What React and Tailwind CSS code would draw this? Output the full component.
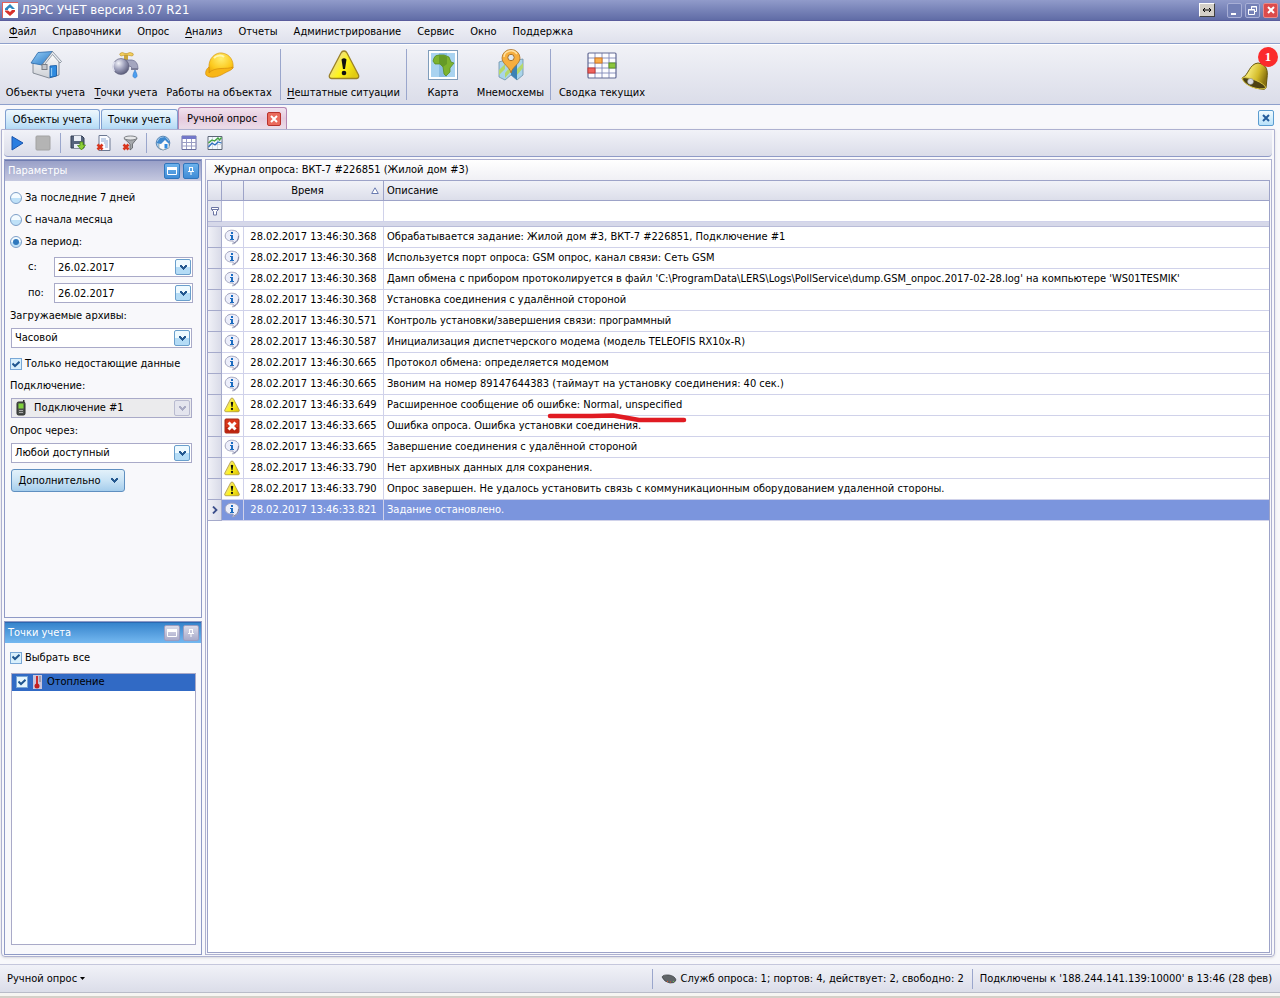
import React from "react";

const CHEVRON = "M0 0h2v1h1v1h1v-1h1v-1h2v2h-1v1h-1v1h-1v1h-1v-1h-1v-1h-1v-1h-1z";

function House({ className }) {
  return (
    <svg viewBox="0 0 32 32" className={className} aria-hidden="true">
      <defs>
        <linearGradient id="roof" x1="0" y1="0" x2="1" y2="1">
          <stop offset="0" stopColor="#9bd2f8" />
          <stop offset="1" stopColor="#2474c4" />
        </linearGradient>
        <linearGradient id="wall" x1="0" y1="0" x2="0" y2="1">
          <stop offset="0" stopColor="#ffffff" />
          <stop offset="1" stopColor="#cdd0d6" />
        </linearGradient>
      </defs>
      <path d="M3 13 L3 24 L19 29 L29 26 V12 L22 4 L12 15 Z" fill="url(#wall)" stroke="#7d838f" strokeWidth="0.900" />
      <path d="M1 14 L8 3.500 L22.500 2.500 L12 16 Z" fill="url(#roof)" stroke="#2867a8" strokeWidth="0.800" />
      <path d="M22.500 2.500 L31.500 12.500 L30 14 L22.500 5.500 L13 17.500 L12 16 Z" fill="#e9edf2" stroke="#6f7886" strokeWidth="0.700" />
      <rect x="12" y="15.500" width="5" height="5" fill="#c3c6cc" stroke="#7b7f87" />
      <path d="M20 17 L26.500 16.500 V27 L20 28.500 Z" fill="#2f8be0" stroke="#1b5da5" strokeWidth="0.900" />
      <path d="M21.500 19v8" stroke="#8cc8f4" strokeWidth="1.200" />
    </svg>
  );
}

function Faucet() {
  return (
    <svg viewBox="0 0 32 32" className="h-8 w-8" aria-hidden="true">
      <defs>
        <radialGradient id="ball" cx="0.350" cy="0.300" r="0.800">
          <stop offset="0" stopColor="#f2f3fa" />
          <stop offset="0.500" stopColor="#9a9cb8" />
          <stop offset="1" stopColor="#4d4f6c" />
        </radialGradient>
      </defs>
      <path d="M14 6h4v7h-4z" fill="#c9a53c" />
      <path d="M10 4.500 q2 -2 5 0 h2 q3 -2 6 0 q1 2 -1 2.500 l-5 -1 h-2 l-4 1 q-2 -1 -1 -2.500z" fill="#f4cf5c" stroke="#b98f28" strokeWidth="0.600" />
      <path d="M13 11 h9 q6 1 6 9 h-6 q0 -3 -3 -3 h-6z" fill="#a4a6bf" stroke="#65678a" strokeWidth="0.700" />
      <circle cx="11" cy="17.500" r="8" fill="url(#ball)" stroke="#5b5d7b" strokeWidth="0.600" />
      <path d="M4.500 13c-2 2-2 7 0 9" stroke="#e0e1ef" strokeWidth="1.500" fill="none" />
      <path d="M21 19h7v2h-7z" fill="#7b7d98" />
      <path d="M25 21c2.500 5 3 7 0 8c-3-1-2.500-3 0-8z" fill="#4d9ff0" stroke="#2b76c9" strokeWidth="0.600" />
    </svg>
  );
}

function Helmet() {
  return (
    <svg viewBox="0 0 32 32" className="h-8 w-8" aria-hidden="true">
      <defs>
        <radialGradient id="hat" cx="0.500" cy="0.250" r="0.800">
          <stop offset="0" stopColor="#ffee70" />
          <stop offset="0.600" stopColor="#fcc91c" />
          <stop offset="1" stopColor="#e39a08" />
        </radialGradient>
      </defs>
      <path d="M6 19 C5 9 13 3 19 4 C27 5 31 12 30 19 L22 23 C17 21 10 22 6 27 Z" fill="url(#hat)" stroke="#d99a14" strokeWidth="0.700" />
      <path d="M6 18 C3 20 2 24 3 26 C7 30 15 28 20 25 C25 22 30 21 30 18 C24 21 12 17 6 24 Z" fill="#f8b616" stroke="#d48c0b" strokeWidth="0.700" />
      <path d="M11 9 C14 6 19 6 21 8" stroke="#fff6b0" strokeWidth="2" fill="none" />
    </svg>
  );
}

function Warning({ className }) {
  return (
    <svg viewBox="0 0 32 32" className={className} aria-hidden="true">
      <defs>
        <linearGradient id="warn" x1="0" y1="0" x2="1" y2="0.600">
          <stop offset="0.300" stopColor="#efdf86" />
          <stop offset="0.600" stopColor="#fff51a" />
          <stop offset="1" stopColor="#e2cb12" />
        </linearGradient>
      </defs>
      <path d="M16 2 Q18 2 19 4 L30.500 26 Q31.500 29 28.500 29.500 H3.500 Q0.500 29 1.500 26 L13 4 Q14 2 16 2Z" fill="url(#warn)" stroke="#9b8228" strokeWidth="1.300" />
      <path d="M13.500 10.500 Q16 8 18.500 10.500 L17 20 H15Z" fill="#111" />
      <circle cx="16" cy="24" r="2.300" fill="#111" />
    </svg>
  );
}

function AfricaMap() {
  return (
    <svg viewBox="0 0 32 32" className="h-8 w-8" aria-hidden="true">
      <rect x="1.500" y="1.500" width="29" height="29" fill="#fff" stroke="#7f9dbb" />
      <rect x="4" y="4" width="24" height="24" fill="#a9d3f0" />
      <path d="M12 4h8v24h-8z" fill="#8abde2" />
      <path d="M7 9 Q8 6 12 6 L17 6 L22 8 L24 13 L27 14 L23 19 L23 23 L19 27 L17 25 L16 18 L13 15 L8 15 L6 12Z" fill="#7db32f" stroke="#50861a" strokeWidth="0.700" />
      <path d="M12 6.500h5l3 1.500v7l-4 3-3-3h-1z" fill="#659a28" />
    </svg>
  );
}

function MapPin() {
  return (
    <svg viewBox="0 0 32 32" className="h-8 w-8" aria-hidden="true">
      <path d="M4 13 L10 11 L16 14 L22 11 L28 10 V26 L22 31 L16 26 L10 31 L4 28Z" fill="#a9d4ea" stroke="#6d8fa8" strokeWidth="0.800" />
      <path d="M16 14 L22 11 V31 L16 26Z" fill="#3c82b4" />
      <path d="M4 21 L10 15 V20 L4 26Z M10 24 L16 17 V22 L10 29Z M22 20 L28 14 V19 L22 26Z" fill="#b5d86a" />
      <path d="M16 24 C15 18 7 15 7 9 A9 8.500 0 0 1 25 9 C25 15 17 18 16 24Z" fill="#f6ae3e" stroke="#a9722a" strokeWidth="0.800" />
      <path d="M9 8 A7 6.500 0 0 1 22 5" stroke="#ffe0a0" strokeWidth="1.500" fill="none" />
      <circle cx="16" cy="8.500" r="3.200" fill="#dfeaf2" stroke="#a9722a" strokeWidth="1" />
    </svg>
  );
}

function Summary() {
  return (
    <svg viewBox="0 0 32 32" className="h-8 w-8" aria-hidden="true">
      <rect x="2" y="4" width="28" height="25" rx="1" fill="#fdfdff" />
      <path d="M9 4v25M16 4v25M23 4v25M2 9h28M2 14h28M2 19h28M2 24h28" stroke="#7f88b8" strokeWidth="0.900" />
      <rect x="9" y="9" width="7" height="5" fill="#f9b04c" stroke="#d8791d" />
      <rect x="23" y="14" width="7" height="5" fill="#8cc63c" stroke="#5c9620" />
      <rect x="2" y="4" width="28" height="25" rx="1" fill="none" stroke="#636a94" strokeWidth="1.200" />
      <rect x="2" y="19" width="7" height="5" fill="#f0645e" stroke="#c43a35" />
    </svg>
  );
}

function Bell() {
  return (
    <svg viewBox="0 0 32 32" className="h-8 w-8" aria-hidden="true">
      <defs>
        <linearGradient id="bell" x1="0" y1="0" x2="1" y2="0.400">
          <stop offset="0" stopColor="#8d7a16" />
          <stop offset="0.350" stopColor="#f3e670" />
          <stop offset="0.700" stopColor="#d3bb2a" />
          <stop offset="1" stopColor="#8a7410" />
        </linearGradient>
      </defs>
      <path d="M2 17 C9 14 9 3 18 2 C27 3 28 10 27 17 L26 27 Q25 29 21 28 C13 27 5 23 2 17Z" fill="url(#bell)" stroke="#665509" strokeWidth="1" />
      <path d="M2 17 C8 15 25 22 26 27 C19 30 4 25 2 17Z" fill="#4d4212" stroke="#d8c544" strokeWidth="1" />
      <circle cx="10.500" cy="20.500" r="3" fill="#d9dde4" stroke="#777" strokeWidth="0.500" />
    </svg>
  );
}

function InfoIcon() {
  return (
    <svg viewBox="0 0 16 16" className="h-4 w-4" aria-hidden="true">
      <path d="M7.500 1.200 C12.500 1.200 14.800 3.500 14.800 7 C14.800 11 12.500 14 8.500 15 C9.500 13.800 9.500 12.800 9 12 C4 12.500 1.200 10 1.200 7 C1.200 3.500 4 1.200 7.500 1.200Z" fill="#eceefa" stroke="#a3a6c0" />
      <path d="M10 14c3-1.500 4.500-4 4.500-7" stroke="#7f82a0" fill="none" />
      <path d="M7 3h2v2H7zM6 6h3v4h1v1H6v-1h1V7H6z" fill="#1b6cc0" />
    </svg>
  );
}

function ErrorIcon() {
  return (
    <svg viewBox="0 0 16 16" className="h-4 w-4" aria-hidden="true">
      <rect x="1" y="1" width="14" height="14" rx="1" fill="#d8371c" stroke="#a32511" />
      <path d="M1.500 9h13v5.500h-13z" fill="#bb2410" />
      <path d="M4.500 4.500l7 7M11.500 4.500l-7 7" stroke="#fff" strokeWidth="3" />
    </svg>
  );
}

const ICONS = { info: InfoIcon, error: ErrorIcon, warn: () => <Warning className="h-4 w-4" /> };

const MENU = [
  ["Ф", "айл"], ["", "Справочники"], ["", "Опрос"], ["А", "нализ"], ["", "Отчеты"],
  ["", "Администрирование"], ["", "Сервис"], ["", "Окно"], ["", "Поддержка"],
];

const ROWS = [
  ["info", "30.368", "Обрабатывается задание: Жилой дом #3, ВКТ-7 #226851, Подключение #1"],
  ["info", "30.368", "Используется порт опроса: GSM опрос, канал связи: Сеть GSM"],
  ["info", "30.368", "Дамп обмена с прибором протоколируется в файл 'C:\\ProgramData\\LERS\\Logs\\PollService\\dump.GSM_опрос.2017-02-28.log' на компьютере 'WS01TESMIK'"],
  ["info", "30.368", "Установка соединения с удалённой стороной"],
  ["info", "30.571", "Контроль установки/завершения связи: программный"],
  ["info", "30.587", "Инициализация диспетчерского модема (модель TELEOFIS RX10x-R)"],
  ["info", "30.665", "Протокол обмена: определяется модемом"],
  ["info", "30.665", "Звоним на номер 89147644383 (таймаут на установку соединения: 40 сек.)"],
  ["warn", "33.649", "Расширенное сообщение об ошибке: Normal, unspecified"],
  ["error", "33.665", "Ошибка опроса. Ошибка установки соединения."],
  ["info", "33.665", "Завершение соединения с удалённой стороной"],
  ["warn", "33.790", "Нет архивных данных для сохранения."],
  ["warn", "33.790", "Опрос завершен. Не удалось установить связь с коммуникационным оборудованием удаленной стороны."],
  ["info", "33.821", "Задание остановлено."],
];

function BigButton({ icon, hot, label, width }) {
  return (
    <button className={`flex flex-col items-center whitespace-nowrap pt-1 ${width}`}>
      {icon}
      <span className="mt-1 leading-4">
        {hot ? <u className="underline-offset-2">{hot}</u> : null}
        {label}
      </span>
    </button>
  );
}

function Divider() {
  return <span className="mx-1 my-1 w-px shrink-0 bg-[#9aa6cc]" />;
}

function DropGlyph({ disabled }) {
  return (
    <span
      className={`pointer-events-none absolute top-0.5 right-0.5 flex h-4 w-4 items-center justify-center rounded-xs border ${
        disabled ? "border-[#b9bbd0] bg-[#e4e5ee]" : "border-[#6a9fcc] bg-linear-to-b from-[#eefaff] from-50% to-[#b4dcf6] to-50%"
      }`}
    >
      <svg viewBox="0 0 7 5" className="h-[5px] w-[7px]" aria-hidden="true">
        <path d={CHEVRON} fill={disabled ? "#a9abc4" : "#24588f"} />
      </svg>
    </span>
  );
}

function Select({ id, value, disabled, icon }) {
  return (
    <div className="relative mt-0.5 mr-[9px] ml-px">
      <select
        id={id}
        disabled={disabled}
        className={`block h-5 w-full appearance-none rounded-none border border-[#a9aac8] pr-5 text-black opacity-100 ${
          disabled ? "bg-[#ebebed] pl-[22px]" : "bg-white pl-[3px]"
        }`}
      >
        <option>{value}</option>
      </select>
      {icon}
      <DropGlyph disabled={disabled} />
    </div>
  );
}

function Check({ label, className }) {
  return (
    <label className={`flex items-center ${className}`}>
      <span className="relative flex h-3 w-3 items-center justify-center">
        <input
          type="checkbox"
          defaultChecked
          className="peer h-3 w-3 appearance-none border border-[#79a7d6] bg-[#d8effc]"
        />
        <svg viewBox="0 0 8 7" className="pointer-events-none absolute h-[7px] w-2" aria-hidden="true">
          <path d="M0.500 2.500L3 5L7.500 0.800" stroke="#20568f" strokeWidth="2" fill="none" />
        </svg>
      </span>
      {label}
    </label>
  );
}

function Radio({ label, checked }) {
  return (
    <label className="flex h-[22px] items-center gap-[3px]">
      <span className="relative flex h-3 w-3 items-center justify-center">
        <input
          type="radio"
          name="range"
          defaultChecked={checked}
          className="peer h-3 w-3 appearance-none rounded-full border border-[#7d9fc8] bg-linear-to-b from-[#f4fbff] from-50% to-[#bfe1f8] to-50%"
        />
        <span className="pointer-events-none absolute hidden h-1.5 w-1.5 rounded-full bg-[#2f78bd] peer-checked:block" />
      </span>
      {label}
    </label>
  );
}

function DateRow({ id, label }) {
  return (
    <div className="flex h-[26px] items-center pr-2 pl-[18px]">
      <label htmlFor={id} className="w-[26px]">{label}</label>
      <div className="relative flex-1">
        <input id={id} type="text" defaultValue="26.02.2017" className="block h-5 w-full border border-[#a9aac8] bg-white px-[3px]" />
        <DropGlyph />
      </div>
    </div>
  );
}

function PanelHead({ title, active }) {
  const btn = active ? "border-[#9b9dc0] bg-linear-to-b from-[#dcdcea] to-[#a9abca]" : "border-[#2f76bd] bg-linear-to-b from-[#6db2ec] to-[#3f8cd6]";
  return (
    <header
      className={`flex h-[21px] shrink-0 items-center gap-[3px] border-t pr-0.5 pl-[3px] ${
        active
          ? "border-[#2a68b0] bg-linear-to-b from-[#3584cc] to-[#74b8f0]"
          : "border-[#6d7aae] bg-linear-to-b from-[#99a0c8] to-[#c6c9e0]"
      }`}
    >
      <h2 className="flex-1 text-white">{title}</h2>
      <button aria-label="Развернуть" className={`flex h-4 w-4 items-center justify-center rounded-xs border ${btn}`}>
        <svg viewBox="0 0 10 8" className="h-2 w-2.5" aria-hidden="true">
          <path d="M0.500 1h9v6.500h-9z" fill="none" stroke="#fff" />
          <path d="M0 0h10v3H0z" fill="#fff" />
        </svg>
      </button>
      <button aria-label="Закрепить" className={`flex h-4 w-4 items-center justify-center rounded-xs border ${btn}`}>
        <svg viewBox="0 0 8 8" className="h-2 w-2" aria-hidden="true">
          <path d="M2 0.500h4M2.500 0v5M5.500 0v5M1 4.500h6M4 5v3" stroke="#fff" fill="none" />
        </svg>
      </button>
    </header>
  );
}

function ToolButton({ label, children }) {
  return (
    <button aria-label={label} className="flex h-5 w-[26px] items-center justify-center">
      <svg viewBox="0 0 16 16" className="h-4 w-4" aria-hidden="true">{children}</svg>
    </button>
  );
}

const RED_X = <path d="M1.500 9.500l5 5M6.500 9.500l-5 5" stroke="#d8351d" strokeWidth="2.600" />;

function JournalTable() {
  const head = "h-5 border-b border-[#9da3c8] bg-linear-to-b from-[#f1f2f8] to-[#dcdeea] font-normal";
  return (
    <table className="w-full table-fixed border-separate border-spacing-0">
      <colgroup>
        <col className="w-3.5" />
        <col className="w-[22px]" />
        <col className="w-[140px]" />
        <col />
      </colgroup>
      <thead>
        <tr>
          <th className={`${head} border-r`} />
          <th className={`${head} border-r`} />
          <th className={`${head} border-r`}>
            <div className="flex items-center pr-1">
              <span className="flex-1 text-center">Время</span>
              <svg viewBox="0 0 8 7" className="h-[7px] w-2" aria-hidden="true">
                <path d="M4 0.800L7.300 6.500H0.700Z" fill="#fff" stroke="#6a7bb0" />
              </svg>
            </div>
          </th>
          <th className={`${head} pl-[3px] text-left`}>Описание</th>
        </tr>
        <tr>
          <td className="h-[21px] border-r border-b border-[#b4b8d6] bg-[#e6e8f1]">
            <svg viewBox="0 0 8 9" className="mx-auto h-[9px] w-2" aria-hidden="true">
              <path d="M0.500 0.500h7v2l-2 2v3.500h-3v-3.500l-2-2z M0.500 2.500h7" fill="#fff" stroke="#6b74a3" />
            </svg>
          </td>
          <td className="border-r border-b border-[#d0d2ea]" />
          <td className="border-r border-b border-[#d0d2ea]" />
          <td className="border-b border-[#d0d2ea]" />
        </tr>
        <tr>
          <td colSpan={4} className="h-[5px] border-b border-[#b9bcd8] bg-[#d6d8e9]" />
        </tr>
      </thead>
      <tbody>
        {ROWS.map(([kind, sec, text], i) => {
          const Icon = ICONS[kind];
          const sel = i === ROWS.length - 1;
          const cell = `h-[21px] border-b border-[#d0d2ea] ${sel ? "bg-[#7b95dd] text-white" : ""}`;
          return (
            <tr key={i}>
              <td className="h-[21px] border-r border-b border-[#a5aacb] bg-linear-to-r from-[#f0f1f7] to-[#d9dbe8]">
                {sel && (
                  <svg viewBox="0 0 6 8" className="mx-auto h-2 w-1.5" aria-hidden="true">
                    <path d="M1 0.500L4.500 4L1 7.500" stroke="#3c4f8c" strokeWidth="1.800" fill="none" />
                  </svg>
                )}
              </td>
              <td className={`${cell} border-r pl-0.5`}><Icon /></td>
              <td className={`${cell} border-r text-center whitespace-nowrap`}>28.02.2017 13:46:{sec}</td>
              <td className={`${cell} pl-[3px] whitespace-nowrap`}>
                <div className="relative">
                  {text}
                  {i === 8 && (
                    <svg viewBox="0 0 140 10" className="pointer-events-none absolute top-4 left-40 h-2.5 w-[140px]" aria-hidden="true">
                      <path d="M3 3 H45 L66 2.500 L78 4.500 L92 7 H137" stroke="#e01b22" strokeWidth="4.500" strokeLinecap="round" strokeLinejoin="round" fill="none" />
                    </svg>
                  )}
                </div>
              </td>
            </tr>
          );
        })}
      </tbody>
    </table>
  );
}

export default function App() {
  const tab = "flex items-center rounded-t-[3px] border border-b-0 whitespace-nowrap";
  const blueTab = "h-5 border-[#7f9fd0] bg-linear-to-b from-[#eef7fd] via-[#d3eafa] via-50% to-[#b3daf5]";
  return (
    <div className="flex min-h-screen flex-col bg-[#f8f8fb] font-['DejaVu_Sans_Condensed','Noto_Sans',sans-serif] text-[11px] leading-4 text-black">
      <header className="flex h-[21px] shrink-0 items-center border-b border-[#5a5c9c] bg-linear-to-b from-[#919bca] to-[#606ca6] pr-0.5 pl-0.5">
        <svg viewBox="0 0 16 16" className="h-4 w-4" aria-hidden="true">
          <path d="M0 0h16v16H0z" fill="#fff" />
          <path d="M0.500 0v16M0 0.500h16" stroke="#e0605a" />
          <path d="M8 2L13 7H10L8 5.500L6 7V8H3V6.500Z" fill="#2b86c0" />
          <path d="M8 14L13 9.500V8H10L8 10L6 8.500H3V9.500Z" fill="#d8332b" />
        </svg>
        <h1 className="flex-1 pl-[3px] text-[13px] text-white">ЛЭРС УЧЕТ версия 3.07 R21</h1>
        <button aria-label="Переключить" className="mr-3 flex h-3.5 w-4 items-center justify-center border border-t-white border-r-[#404040] border-b-[#404040] border-l-white bg-[#d4d0c8]">
          <svg viewBox="0 0 10 6" className="h-1.5 w-2.5" aria-hidden="true">
            <path d="M1 3h8M3 1L1 3L3 5M7 1L9 3L7 5" stroke="#000" fill="none" />
          </svg>
        </button>
        <div className="flex gap-[3px]">
          <button aria-label="Свернуть" className="flex h-[15px] w-[15px] items-center justify-center rounded-xs border border-[#a8afd6] bg-[#7380b6]">
            <svg viewBox="0 0 9 9" className="h-[9px] w-[9px]" aria-hidden="true"><path d="M1 7h5v2H1z" fill="#fff" /></svg>
          </button>
          <button aria-label="Восстановить" className="flex h-[15px] w-[15px] items-center justify-center rounded-xs border border-[#a8afd6] bg-[#7380b6]">
            <svg viewBox="0 0 9 9" className="h-[9px] w-[9px]" aria-hidden="true">
              <path d="M3.500 3V0.500h5v5H6.500M3 1h6M0.500 3.500h6v5h-6zM0 4h7" stroke="#fff" fill="none" />
            </svg>
          </button>
          <button aria-label="Закрыть" className="flex h-[15px] w-[15px] items-center justify-center rounded-xs border border-[#e88a8a] bg-[#dc4b4b]">
            <svg viewBox="0 0 8 8" className="h-2 w-2" aria-hidden="true"><path d="M1 1l6 6M7 1l-6 6" stroke="#fff" strokeWidth="2" /></svg>
          </button>
        </div>
      </header>

      <nav className="flex h-[23px] shrink-0 items-center gap-4 border-b border-[#8ea0cc] bg-linear-to-b from-[#f1f2f7] to-[#dfe1ec] pl-[9px]">
        {MENU.map(([hot, rest]) => (
          <button key={rest}>
            {hot && <u className="underline-offset-2">{hot}</u>}
            {rest}
          </button>
        ))}
      </nav>

      <div className="flex h-[61px] shrink-0 border-t border-b border-t-white border-b-[#8ea0cc] bg-linear-to-b from-[#f1f2f7] to-[#dbdde9] pl-px">
        <BigButton icon={<House className="h-8 w-8" />} label="Объекты учета" width="w-[89px]" />
        <BigButton icon={<Faucet />} hot="Т" label="очки учета" width="w-[72px]" />
        <BigButton icon={<Helmet />} label="Работы на объектах" width="w-[114px]" />
        <Divider />
        <BigButton icon={<Warning className="h-8 w-8" />} hot="Н" label="ештатные ситуации" width="w-[117px]" />
        <Divider />
        <BigButton icon={<AfricaMap />} label="Карта" width="w-[64px]" />
        <BigButton icon={<MapPin />} label="Мнемосхемы" width="w-[71px]" />
        <Divider />
        <BigButton icon={<Summary />} label="Сводка текущих" width="w-[94px]" />
        <button aria-label="Уведомления" className="relative ml-auto pt-1 pr-2">
          <Bell />
          <span className="absolute top-0.5 right-0.5 flex h-5 w-5 items-center justify-center rounded-full bg-[#fb2b2b] font-['Liberation_Serif',serif] text-[13px] font-bold text-white">1</span>
        </button>
      </div>

      <div className="flex h-6 shrink-0 items-end pl-[5px]">
        <button className={`${tab} ${blueTab} w-[95px] justify-center`}>Объекты учета</button>
        <button className={`${tab} ${blueTab} ml-px w-[77px] justify-center`}>Точки учета</button>
        <div className={`${tab} h-[22px] w-[109px] gap-2.5 border-[#b487b4] bg-linear-to-b from-[#f1e3ef] via-[#e5cadd] via-50% to-[#ecdeea] pl-2`}>
          <button>Ручной опрос</button>
          <button aria-label="Закрыть вкладку" className="flex h-3.5 w-3.5 items-center justify-center rounded-xs border border-[#b8322c] bg-[#ea6a5c]">
            <svg viewBox="0 0 8 8" className="h-2 w-2" aria-hidden="true"><path d="M1 1l6 6M7 1l-6 6" stroke="#fff" strokeWidth="2" /></svg>
          </button>
        </div>
        <button aria-label="Закрыть окно" className="mr-1.5 mb-[3px] ml-auto flex h-4 w-4 items-center justify-center rounded-xs border border-[#5b9cd0] bg-linear-to-b from-[#f2fbff] to-[#b9e2fa]">
          <svg viewBox="0 0 8 8" className="h-2 w-2" aria-hidden="true"><path d="M1 1l6 6M7 1l-6 6" stroke="#245c9c" strokeWidth="2" /></svg>
        </button>
      </div>

      <main className="mr-[5px] mb-[7px] ml-px flex flex-1 flex-col rounded-b-sm border border-[#aeb1d0] px-0.5 pb-px shadow-sm">
        <div className="flex h-[27px] shrink-0 items-center rounded-b-sm border-b border-[#8f9ac6] bg-linear-to-b from-[#f1f2f8] to-[#dbdde9]">
          <ToolButton label="Запустить"><path d="M3 1.500L14 8L3 15Z" fill="#2a7de0" stroke="#1a55ae" /></ToolButton>
          <ToolButton label="Остановить"><rect x="1" y="1" width="14" height="14" rx="1" fill="#b4b4b4" stroke="#a2a2a2" /></ToolButton>
          <span className="mx-1 h-5 w-px bg-[#9aa6cc]" />
          <ToolButton label="Сохранить">
            <path d="M1 1h11l2 2v10H1z" fill="#56637c" stroke="#333e55" />
            <path d="M4 1h7v5H4zM4 9h7v4H4z" fill="#e9edf5" />
            <path d="M10 7h3v3h2.500L11.500 15L7.500 10.500H10z" fill="#8fd037" stroke="#4b8a12" strokeWidth="0.800" />
          </ToolButton>
          <ToolButton label="Удалить">
            <path d="M3 0.500h8l3 3v12H3z" fill="#fafbff" stroke="#6c7892" />
            <path d="M5 4h5M5 6h7M8 8h4M9 10h3M9 12h3" stroke="#8fa8cf" />
            {RED_X}
          </ToolButton>
          <ToolButton label="Сбросить фильтр">
            <path d="M2 3.500L8 9V15L10.500 13V9L15 3.500Z" fill="#a5a8ac" stroke="#5a5d62" strokeWidth="0.800" />
            <ellipse cx="8.500" cy="3" rx="6.500" ry="2" fill="#e6e7e9" stroke="#66696e" strokeWidth="0.800" />
            {RED_X}
          </ToolButton>
          <span className="mx-[3px] h-5 w-px bg-[#9aa6cc]" />
          <ToolButton label="Объект">
            <circle cx="8" cy="8" r="6.800" fill="#a8cdec" stroke="#5b87b4" />
            <path d="M4 8v5l4 2 6-2V8L10 4Z" fill="#fafafa" stroke="#788" strokeWidth="0.600" />
            <path d="M1.500 8L5 3L10 2L15 7.500L13.500 8.500L10 5L6 9Z" fill="#3d88cf" />
            <path d="M9.500 9h3v4.500h-3z" fill="#2f8be0" />
          </ToolButton>
          <ToolButton label="Таблица">
            <path d="M1 1h14v13.500H1z" fill="#fff" stroke="#6a6fa0" />
            <path d="M1 1h14v3H1z" fill="#7277c8" />
            <path d="M5.500 4v10M10.500 4v10M1 7.500h14M1 11h14" stroke="#9a9dc4" />
          </ToolButton>
          <ToolButton label="График">
            <path d="M1 1.500h14v13H1z" fill="#f4f8fc" stroke="#5d6778" />
            <path d="M1 5.500h14M1 9.500h14M5.500 2v12M10.500 2v12" stroke="#c0c9d6" strokeWidth="0.700" />
            <path d="M1.500 12L5 8L8 10L11 7L14.500 8" stroke="#2b6fc0" strokeWidth="1.300" fill="none" />
            <path d="M1.500 8L5 5L7.500 6L11 3L12.500 5L14.500 2.500" stroke="#3da23a" strokeWidth="1.300" fill="none" />
          </ToolButton>
        </div>

        <div className="mt-0.5 flex flex-1 gap-[3px]">
          <aside className="flex w-[198px] shrink-0 flex-col gap-[3px]">
            <section className="flex grow-[460] basis-0 flex-col border border-[#8f9ac6]">
              <PanelHead title="Параметры" />
              <form className="pt-1.5 pb-2 pl-[5px]">
                <Radio label="За последние 7 дней" />
                <Radio label="С начала месяца" />
                <Radio label="За период:" checked />
                <div className="mt-px">
                  <DateRow id="from" label="с:" />
                  <DateRow id="to" label="по:" />
                </div>
                <label htmlFor="archive" className="flex h-5 items-center">Загружаемые архивы:</label>
                <Select id="archive" value="Часовой" />
                <Check label="Только недостающие данные" className="mt-1 h-6 gap-[3px]" />
                <label htmlFor="conn" className="flex h-5 items-center">Подключение:</label>
                <Select
                  id="conn"
                  value="Подключение #1"
                  disabled
                  icon={
                    <svg viewBox="0 0 10 16" className="pointer-events-none absolute top-0.5 left-[5px] h-4 w-2.5" aria-hidden="true">
                      <path d="M7 0h1.500v3H7z" fill="#333" />
                      <rect x="1" y="2" width="8" height="13" rx="1.500" fill="#4b4f4b" stroke="#2a2d2a" />
                      <rect x="2.500" y="3.500" width="5" height="5" fill="#7fd13a" />
                      <path d="M3 10.500h4M3 12.500h4" stroke="#aaa" />
                    </svg>
                  }
                />
                <label htmlFor="via" className="mt-[3px] flex h-5 items-center">Опрос через:</label>
                <Select id="via" value="Любой доступный" />
                <button type="button" className="mt-1.5 ml-px flex h-[23px] w-[114px] items-center justify-center gap-2.5 rounded-[3px] border border-[#5f8fc0] bg-linear-to-b from-[#e3f1fa] via-[#c9e3f5] via-50% to-[#a5cdec]">
                  Дополнительно
                  <svg viewBox="0 0 7 5" className="h-[5px] w-[7px]" aria-hidden="true"><path d={CHEVRON} fill="#24588f" /></svg>
                </button>
              </form>
            </section>
            <section className="flex grow-[335] basis-0 flex-col border border-[#8f9ac6]">
              <PanelHead title="Точки учета" active />
              <div className="flex flex-1 flex-col pr-[5px] pb-[9px] pl-[5px]">
                <Check label="Выбрать все" className="mt-[3px] h-6 gap-[3px]" />
                <ul className="mt-[3px] ml-px flex-1 border border-[#a9aac8] bg-white">
                  <li className="flex h-[17px] items-center bg-[#316ac5] pl-1">
                    <label className="flex items-center">
                      <span className="relative flex h-3 w-3 items-center justify-center">
                        <input type="checkbox" defaultChecked className="h-3 w-3 appearance-none border border-[#79a7d6] bg-[#e6f5fd]" />
                        <svg viewBox="0 0 8 7" className="pointer-events-none absolute h-[7px] w-2" aria-hidden="true">
                          <path d="M0.500 2.500L3 5L7.500 0.800" stroke="#20568f" strokeWidth="2" fill="none" />
                        </svg>
                      </span>
                      <svg viewBox="0 0 16 16" className="mx-px h-4 w-4" aria-hidden="true">
                        <rect x="4" y="1" width="9" height="14" fill="#c9c5dc" />
                        <path d="M8 2v8" stroke="#cc2a2a" strokeWidth="2" />
                        <circle cx="8" cy="12" r="2.500" fill="#c01f1f" />
                        <path d="M10 3h2M10 5h2M10 7h2" stroke="#555" strokeWidth="0.700" />
                      </svg>
                      <span className="pl-px">Отопление</span>
                    </label>
                  </li>
                </ul>
              </div>
            </section>
          </aside>
          <section className="flex min-w-0 flex-1 flex-col border border-[#aeb1d0]">
            <h2 className="flex h-5 shrink-0 items-center bg-linear-to-b from-white to-[#f0f0f5] pl-2">Журнал опроса: ВКТ-7 #226851 (Жилой дом #3)</h2>
            <div className="mx-px mb-px flex-1 border border-[#9da3c8] bg-white">
              <JournalTable />
            </div>
          </section>
        </div>
      </main>

      <footer className="flex h-[29px] shrink-0 items-center border-t border-b border-t-[#c5c7dc] border-b-[#b9bbc8] bg-linear-to-b from-[#f1f2f8] to-[#dbdde9] pr-2 pl-[7px]">
        <button className="flex items-center gap-[3px]">
          Ручной опрос
          <svg viewBox="0 0 5 3" className="h-[3px] w-[5px]" aria-hidden="true"><path d="M0 0h5L2.500 3z" fill="#000" /></svg>
        </button>
        <span className="ml-auto h-5 w-px bg-[#9aa6cc]" />
        <div className="flex items-center gap-1 px-2">
          <svg viewBox="0 0 16 10" className="h-2.5 w-4" aria-hidden="true">
            <path d="M1 3 Q2 0.500 8 1 Q14 2 15 6 Q14 9.500 9 9 Q3 8 1 3Z" fill="#5f6468" stroke="#3b3e42" strokeWidth="0.700" />
            <path d="M6 7.500h1M9 8h1" stroke="#e0562a" />
            <path d="M12 7.500h1" stroke="#6ac04a" />
          </svg>
          Служб опроса: 1; портов: 4, действует: 2, свободно: 2
        </div>
        <span className="h-5 w-px bg-[#9aa6cc]" />
        <div className="pl-[7px]">Подключены к '188.244.141.139:10000' в 13:46 (28 фев)</div>
      </footer>
      <div className="h-[5px] shrink-0 border-b-2 border-[#d4d0c8] bg-[#f6f5f2]" />
    </div>
  );
}
